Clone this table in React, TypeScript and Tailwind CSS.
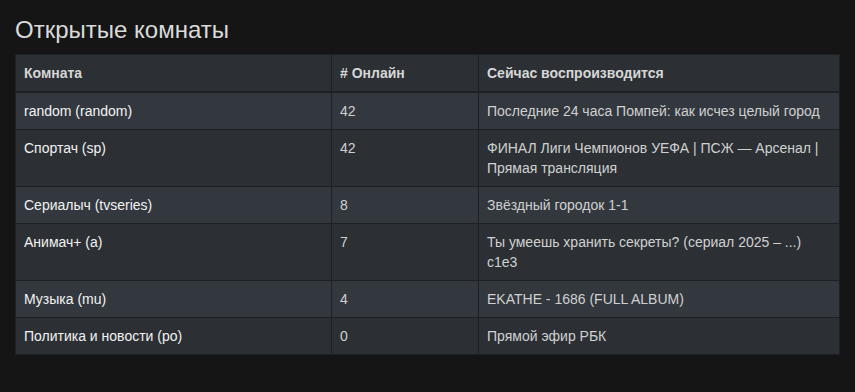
const rooms = [
  { name: "random (random)", online: 42, playing: "Последние 24 часа Помпей: как исчез целый город" },
  { name: "Спортач (sp)", online: 42, playing: "ФИНАЛ Лиги Чемпионов УЕФА | ПСЖ — Арсенал | Прямая трансляция" },
  { name: "Сериалыч (tvseries)", online: 8, playing: "Звёздный городок 1-1" },
  { name: "Анимач+ (a)", online: 7, playing: "Ты умеешь хранить секреты? (сериал 2025 – ...) c1e3" },
  { name: "Музыка (mu)", online: 4, playing: "EKATHE - 1686 (FULL ALBUM)" },
  { name: "Политика и новости (po)", online: 0, playing: "Прямой эфир РБК" },
];

const App: React.FC = () => {
  return (
    <div
      className="w-full min-h-[392px] bg-[#151515] px-[15px] pt-[15px]"
      style={{ fontFamily: '"Liberation Sans", Arial, sans-serif' }}
    >
      <h2 className="text-[24px] leading-[29px] text-[#dadada] mb-[10px]">Открытые комнаты</h2>

      <table className="w-[824px] table-fixed border-collapse text-[14px] leading-5">
        <colgroup>
          <col className="w-[316px]" />
          <col className="w-[147px]" />
          <col className="w-[361px]" />
        </colgroup>
        <thead>
          <tr className="bg-[#2c3035]">
            <th className="border border-b-2 border-[#1d2024] px-2 py-2 text-left font-bold text-[#d6d6d6]">Комната</th>
            <th className="border border-b-2 border-[#1d2024] px-2 py-2 text-left font-bold text-[#d6d6d6]"># Онлайн</th>
            <th className="border border-b-2 border-[#1d2024] px-2 py-2 text-left font-bold text-[#d6d6d6]">Сейчас воспроизводится</th>
          </tr>
        </thead>
        <tbody>
          {rooms.map((room, i) => (
            <tr key={room.name} className={i % 2 === 0 ? "bg-[#33383f]" : "bg-[#2c3035]"}>
              <td className="border border-[#1d2024] px-2 py-2 align-top text-[#f2f2f2]">{room.name}</td>
              <td className="border border-[#1d2024] px-2 py-2 align-top text-[#d0d0d0]">{room.online}</td>
              <td className="border border-[#1d2024] px-2 py-2 align-top text-[#d0d0d0]">{room.playing}</td>
            </tr>
          ))}
        </tbody>
      </table>
    </div>
  );
};

export default App;
